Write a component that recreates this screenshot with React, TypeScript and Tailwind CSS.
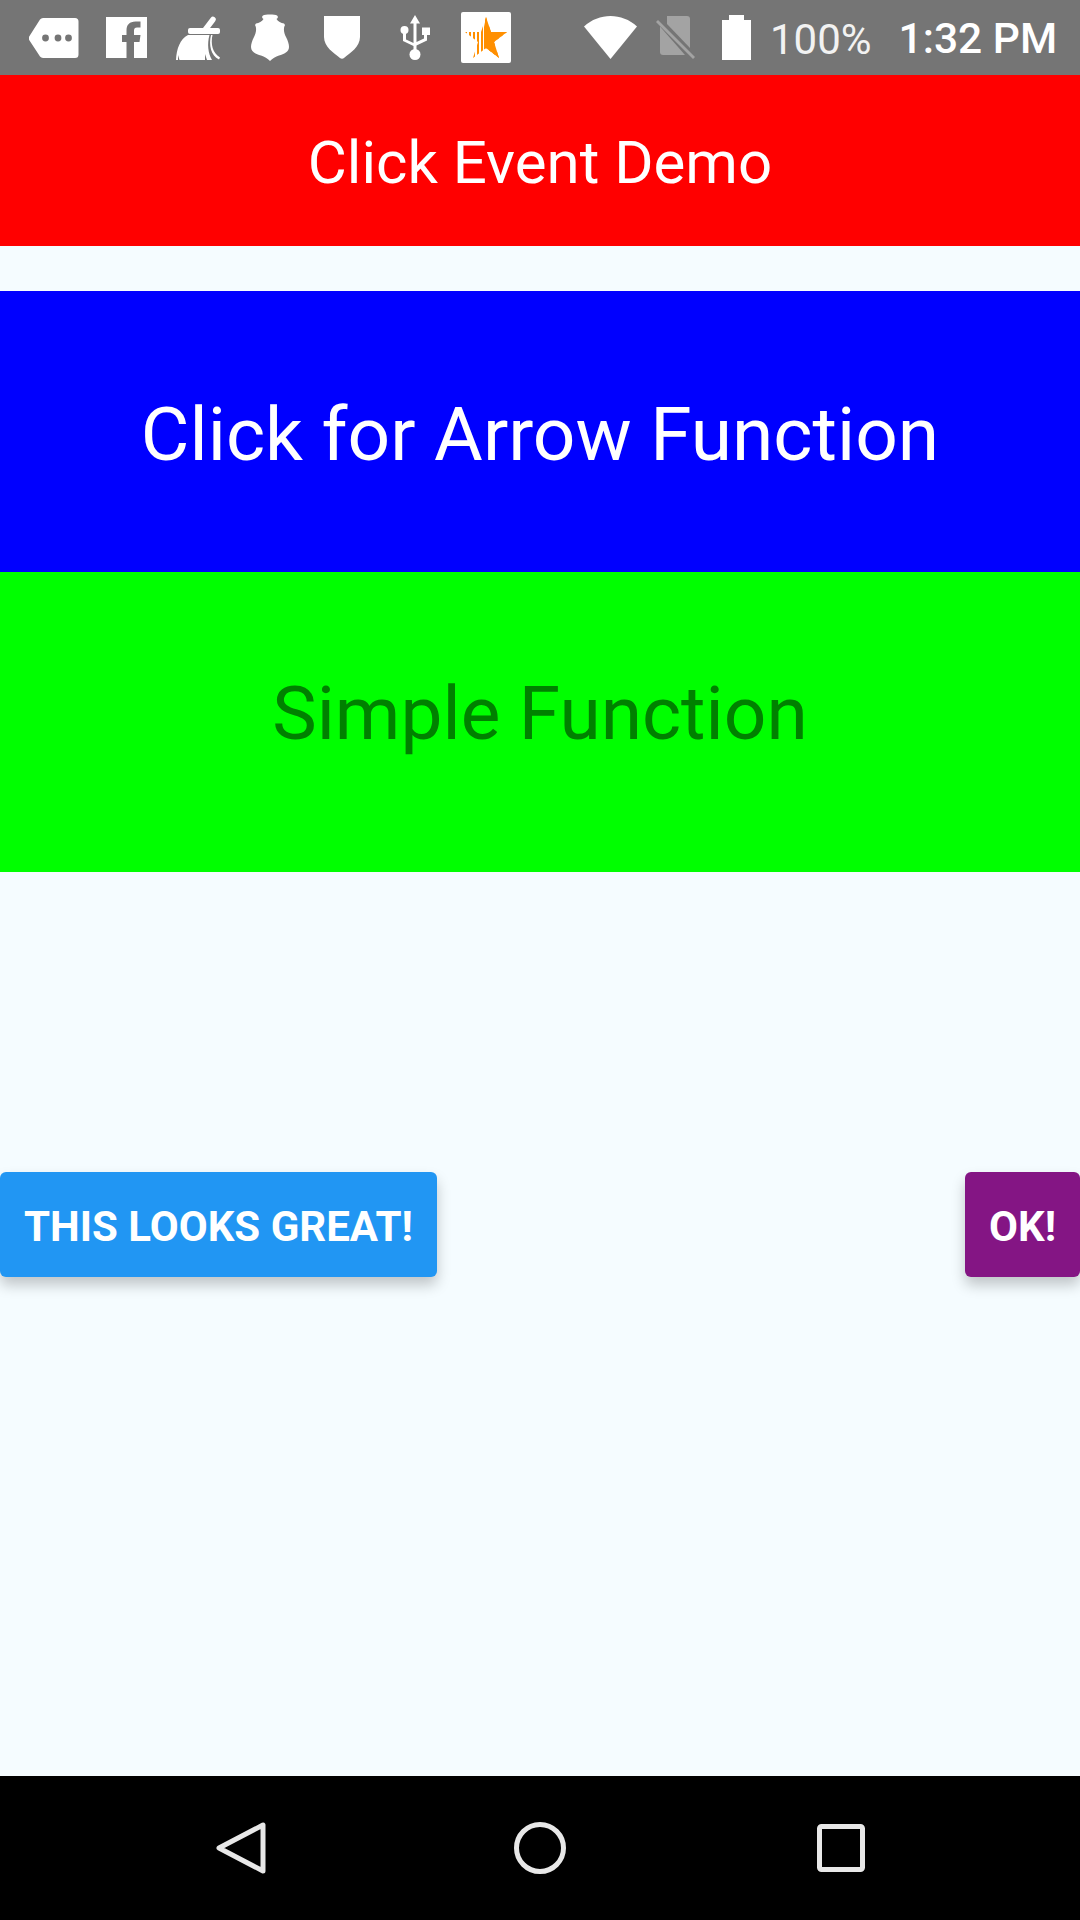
const roboto = "font-['Roboto',sans-serif]";

function StatusIcons() {
  return (
    <div className="flex items-center h-full">
      {/* tag with dots */}
      <svg className="ml-[29px] w-[50px] h-[40px]" viewBox="0 0 50 40">
        <path d="M14 0H46a3.5 3.5 0 0 1 3.5 3.5V36.500a3.500 3.500 0 0 1-3.500 3.500H14a4 4 0 0 1-3-1.500L.5 22.500a4 4 0 0 1 0-4.500L11 1.500A4 4 0 0 1 14 0Z" fill="#fff" />
        <circle cx="16.500" cy="20" r="3.400" fill="#757575" />
        <circle cx="29" cy="20" r="3.400" fill="#757575" />
        <circle cx="39.500" cy="20" r="3.400" fill="#757575" />
      </svg>
      {/* facebook */}
      <svg className="ml-[27px] w-[41px] h-[41px]" viewBox="0 0 41 41">
        <path d="M0 0H41V41H28V25H33.500L34.500 18H28V13.500C28 11.500 29 10.500 31 10.500H34.500V4.500H29.500C23.500 4.500 20.500 8 20.500 13V18H16V25H20.500V41H0Z" fill="#fff" />
      </svg>
      {/* broom */}
      <svg className="ml-[29px] w-[45px] h-[44px]" viewBox="0 0 45 44">
        <path d="M37 3.500L29 14" stroke="#fff" strokeWidth="5.500" strokeLinecap="round" fill="none" />
        <rect x="12" y="12" width="32" height="6" rx="2" fill="#fff" />
        <path d="M12 19C4 23 .5 33 0 44H2V39L3.500 44H29V38L31 44H36C32 37 31 28 33.500 19Z" fill="#fff" />
        <path d="M36.500 19C34.500 28 36.500 37 44 41.500L43 43.500C35 40 32.500 29 35 19Z" fill="#fff" />
      </svg>
      {/* badge */}
      <svg className="ml-[30px] w-[38px] h-[47px]" viewBox="0 0 38 47">
        <path d="M12 1.500C14 .2 24 .2 26 1.500C27.500 2.500 27 4.500 25.500 5C27 7.500 30 9 33 9.500L34 11C32 14 33 19 35 23C37 27 38 30 38 33C38 38 33 40 28 41.500C24.500 42.500 21.500 44.500 19 47C16.500 44.500 13.500 42.500 10 41.500C5 40 0 38 0 33C0 30 1 27 3 23C5 19 6 14 4 11L5 9.500C8 9 11 7.500 12.500 5C11 4.500 10.500 2.500 12 1.500Z" fill="#fff" />
      </svg>
      {/* shield */}
      <svg className="ml-[35px] w-[36px] h-[43px]" viewBox="0 0 36 43">
        <path d="M0 0H36V21C36 31 26 37 20 42C19 43 17 43 16 42C10 37 0 31 0 21Z" fill="#fff" />
      </svg>
      {/* usb */}
      <svg className="ml-[40px] w-[30px] h-[45px]" viewBox="0 0 30 45">
        <path d="M15 0L20 8.500H16.500V27L24 23.500V20H22V12.500H30V20H27V25.500L16.500 30.500V35.500H13.500V31L3 26V17H6V24.500L13.500 28V8.500H10Z" fill="#fff" />
        <circle cx="4.500" cy="15" r="4" fill="#fff" />
        <circle cx="15" cy="39.500" r="5.500" fill="#fff" />
      </svg>
      {/* star tile */}
      <div className="ml-[31px] w-[50px] h-[51px] bg-white rounded-[2px] flex items-center justify-center">
        <svg className="w-[43px] h-[42px]" viewBox="0 0 43 42">
          <defs>
            <pattern id="stripes" width="4" height="4" patternUnits="userSpaceOnUse">
              <rect width="2" height="4" fill="#ff8f00" />
            </pattern>
          </defs>
          <path d="M21 0L26 15H42L29 25L34 41L21 31L8 41L13 25L0 15H16Z" fill="url(#stripes)" />
          <path d="M21 0L26 15H42L29 25L34 41L21 31L19 32.500V10Z" fill="#ff8f00" />
        </svg>
      </div>
      {/* wifi */}
      <svg className="ml-[73px] w-[53px] h-[43px]" viewBox="0 0 53 43">
        <path d="M0 10.500C15-3.500 38-3.500 53 10.500L26.500 43Z" fill="#fff" />
      </svg>
      {/* no sim */}
      <svg className="ml-[18px] w-[40px] h-[43px]" viewBox="0 0 40 43">
        <path d="M12 0H32a3 3 0 0 1 3 3V32L12 8 12 7 Z" fill="#a3a3a3" />
        <path d="M5 10.500L30 39H8a3 3 0 0 1-3-3Z" fill="#a3a3a3" />
        <path d="M1 6L3 4 40 41 38 43Z" fill="#a3a3a3" />
      </svg>
      {/* battery */}
      <svg className="ml-[27px] w-[29px] h-[45px]" viewBox="0 0 29 45">
        <path d="M7 0H22V5H29V45H0V5H7Z" fill="#fff" />
      </svg>
      <span className={`ml-[19px] pt-[4px] text-[42px] leading-none text-[#f2f2f2] ${roboto}`}>100%</span>
      <span className={`ml-[27px] pt-[4px] text-[42.500px] leading-none text-white font-medium ${roboto}`}>1:32 PM</span>
    </div>
  );
}

export default function App() {
  return (
    <div className={`w-[1080px] h-[1920px] flex flex-col bg-[#f5fcff] overflow-hidden ${roboto}`}>
      <div className="h-[75px] shrink-0 bg-[#757575]">
        <StatusIcons />
      </div>

      <div className="h-[171px] pt-[5px] flex items-center justify-center bg-[#ff0000] text-white text-[60px]">
        Click Event Demo
      </div>

      <div className="mt-[45px] h-[281px] pt-[7px] flex items-center justify-center bg-[#0000ff] text-white text-[74.800px]">
        Click for Arrow Function
      </div>

      <div className="h-[300px] pb-[16px] flex items-center justify-center bg-[#00ff00] text-[#008000] text-[74.800px]">
        Simple Function
      </div>

      <div className="flex-1 pt-[300px]">
        <div className="flex justify-between text-white font-bold text-[42px]">
          <button className="w-[437px] h-[105px] pt-[4px] bg-[#2196f3] rounded-[6px] shadow-[0_8px_14px_rgba(0,0,0,0.22)]">
            THIS LOOKS GREAT!
          </button>
          <button className="w-[115px] h-[105px] pt-[4px] bg-[#841584] rounded-[6px] shadow-[0_8px_14px_rgba(0,0,0,0.22)]">
            OK!
          </button>
        </div>
      </div>

      <div className="h-[144px] shrink-0 bg-black flex items-start pt-[46px]">
        <svg className="ml-[216px] w-[50px] h-[52px]" viewBox="0 0 50 52" fill="none" stroke="#e8e8e8" strokeWidth="5" strokeLinejoin="round">
          <path d="M47 3V49L3 26Z" />
        </svg>
        <svg className="ml-[248px] w-[52px] h-[52px]" viewBox="0 0 52 52" fill="none" stroke="#e8e8e8" strokeWidth="5">
          <circle cx="26" cy="26" r="23.500" />
        </svg>
        <svg className="ml-[251px] w-[48px] h-[48px] mt-[2px]" viewBox="0 0 48 48" fill="none" stroke="#e8e8e8" strokeWidth="5" strokeLinejoin="round">
          <rect x="2.500" y="2.500" width="43" height="43" rx="2" />
        </svg>
      </div>
    </div>
  );
}
